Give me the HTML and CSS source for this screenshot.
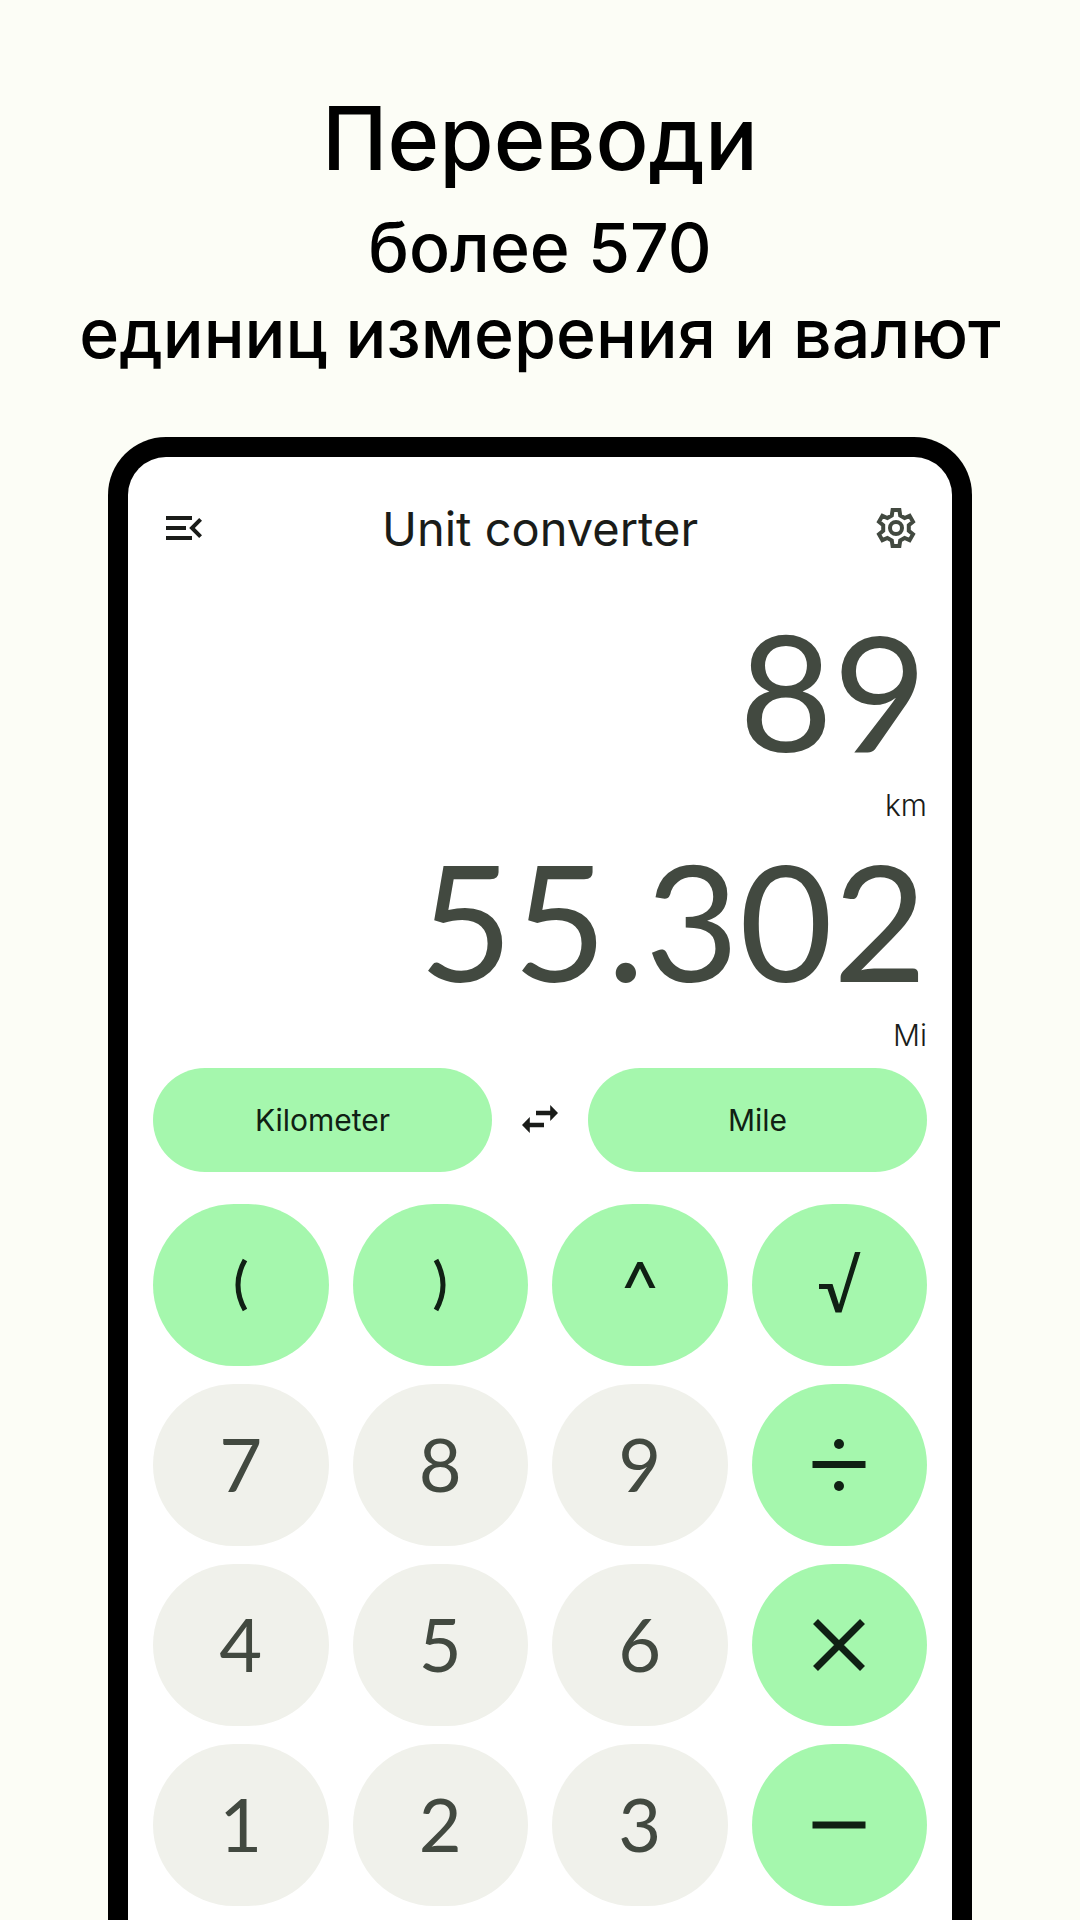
FILE: index.html
```html
<!DOCTYPE html>
<html lang="ru">
<head>
<meta charset="utf-8">
<meta name="viewport" content="width=device-width, initial-scale=1">
<title>Unit converter</title>
<link rel="stylesheet" href="styles.css">
</head>
<body>
<main class="promo">
  <header class="headline">
    <h1 class="headline-title">Переводи</h1>
    <p class="headline-text">более 570<br>единиц измерения и валют</p>
  </header>
  <section class="phone" lang="en">
    <div class="app-bar">
      <button class="icon-button" type="button" aria-label="Menu">
        <svg class="icon" viewBox="0 0 24 24" aria-hidden="true"><path d="M3 18h13v-2H3v2zM3 13h10v-2H3v2zm0-7v2h13V6H3zm18 9.59L17.42 12 21 8.41 19.59 7l-5 5 5 5L21 15.59z"/></svg>
      </button>
      <h2 class="app-title">Unit converter</h2>
      <button class="icon-button icon-button-muted" type="button" aria-label="Settings">
        <svg class="icon" viewBox="0 0 24 24" aria-hidden="true"><g fill="none" stroke="currentColor" stroke-width="2"><path d="M10.300 3h3.400l.4 2.700 2.200 1.300 2.500-1.100 1.700 3-2.100 1.700v2.800l2.100 1.700-1.700 3-2.500-1.100-2.200 1.300-.4 2.700h-3.400l-.4-2.700-2.200-1.300-2.500 1.100-1.700-3 2.100-1.700v-2.800L3.500 8.900l1.700-3L7.700 7l2.200-1.300z"/><circle cx="12" cy="12" r="3"/></g></svg>
      </button>
    </div>
    <div class="display">
      <output class="value">89</output>
      <span class="unit">km</span>
      <output class="value">55.302</output>
      <span class="unit">Mi</span>
    </div>
    <div class="units">
      <button class="unit-button" type="button">Kilometer</button>
      <button class="swap-button" type="button" aria-label="Swap units">
        <svg class="icon" viewBox="0 0 24 24" aria-hidden="true"><path d="M6.900 10.500L3 14.500l3.900 4v-2.900H14v-2.200H6.900zM21 8.500l-3.900-4v2.900H10v2.200h7.100v2.900z"/></svg>
      </button>
      <button class="unit-button" type="button">Mile</button>
    </div>
    <div class="keypad">
      <button class="key key-action" type="button" aria-label="Left parenthesis"><svg class="key-icon" viewBox="0 0 60 60" aria-hidden="true"><path d="M34 5Q20 30 34 55"/></svg></button>
      <button class="key key-action" type="button" aria-label="Right parenthesis"><svg class="key-icon" viewBox="0 0 60 60" aria-hidden="true"><path d="M26 5Q40 30 26 55"/></svg></button>
      <button class="key key-action" type="button" aria-label="Power"><svg class="key-icon" viewBox="0 0 60 60" aria-hidden="true"><path class="solid" d="M14.500 33L27.500 7h5L45.500 33h-6L30 13.500 20.500 33z"/></svg></button>
      <button class="key key-action" type="button" aria-label="Square root"><svg class="key-icon" viewBox="0 0 60 60" aria-hidden="true"><path class="solid" d="M10 29h13.500L30 49.500 46 -3h5.500L32.500 57.500h-6L18.500 34H10z"/></svg></button>
      <button class="key" type="button">7</button>
      <button class="key" type="button">8</button>
      <button class="key" type="button">9</button>
      <button class="key key-action" type="button" aria-label="Divide"><svg class="key-icon" viewBox="0 0 60 60" aria-hidden="true"><path class="bar" d="M3.500 29.500h53"/><circle class="solid" cx="30" cy="9" r="5"/><circle class="solid" cx="30" cy="51" r="5"/></svg></button>
      <button class="key" type="button">4</button>
      <button class="key" type="button">5</button>
      <button class="key" type="button">6</button>
      <button class="key key-action" type="button" aria-label="Multiply"><svg class="key-icon" viewBox="0 0 60 60" aria-hidden="true"><path class="bar" d="M6.500 6.500l47 47M53.500 6.500l-47 47"/></svg></button>
      <button class="key" type="button">1</button>
      <button class="key" type="button">2</button>
      <button class="key" type="button">3</button>
      <button class="key key-action" type="button" aria-label="Subtract"><svg class="key-icon" viewBox="0 0 60 60" aria-hidden="true"><path class="bar" d="M3.500 30h53"/></svg></button>
    </div>
  </section>
</main>
</body>
</html>
```
FILE: styles.css
```css
* {
  box-sizing: border-box;
}

body {
  margin: 0;
  background: #fcfdf6;
  color: #000;
  font-family: Inter, "Noto Sans", sans-serif;
}

button {
  padding: 0;
  border: 0;
  background: none;
  color: inherit;
  font: inherit;
  cursor: pointer;
}

.promo {
  display: flex;
  flex-direction: column;
  align-items: center;
  min-height: 100vh;
}

.headline {
  padding-top: 88px;
  text-align: center;
}

.headline-title {
  margin: 0;
  font-size: 88px;
  font-weight: 500;
  line-height: 100px;
}

.headline-text {
  margin: 16px 0 0;
  font-size: 68px;
  font-weight: 500;
  line-height: 86px;
}

.phone {
  display: flex;
  flex-direction: column;
  flex-grow: 1;
  width: 80%;
  margin-top: 61px;
  padding: 3px 25px 0;
  border: 20px solid #000;
  border-bottom: 0;
  border-radius: 58px 58px 0 0;
  background: #fff;
}

.app-bar {
  display: flex;
  align-items: center;
  justify-content: space-between;
  height: 136px;
  padding: 0 7px;
  color: #1a1c19;
}

.icon-button {
  display: flex;
  width: 48px;
  height: 48px;
}

.icon-button-muted {
  color: #424940;
}

.icon {
  width: 48px;
  height: 48px;
  fill: currentColor;
}

.app-title {
  margin: 0;
  font-size: 47px;
  font-weight: 400;
}

.display {
  display: flex;
  flex-direction: column;
  align-items: flex-end;
  padding-bottom: 12px;
}

.value {
  color: #424940;
  font-family: Lato, sans-serif;
  font-size: 162px;
  font-kerning: none;
  line-height: 188px;
}

.unit {
  color: #1a1c19;
  font-size: 30px;
  font-weight: 300;
  line-height: 42px;
}

.units {
  display: flex;
  align-items: center;
  color: #1a1c19;
}

.unit-button {
  flex: 1;
  height: 104px;
  border-radius: 52px;
  background: #a5f7ad;
  color: #102014;
  font-size: 30px;
  font-weight: 400;
}

.swap-button {
  display: flex;
  justify-content: center;
  width: 96px;
}

.keypad {
  display: grid;
  grid-template-columns: repeat(4, 1fr);
  gap: 18px 24px;
  padding: 32px 0 14px;
}

.key {
  display: flex;
  align-items: center;
  justify-content: center;
  height: 162px;
  padding-bottom: 4px;
  border-radius: 81px;
  background: #f0f1eb;
  color: #424940;
  font-family: Lato, sans-serif;
  font-size: 74px;
}

.key-action {
  padding-bottom: 0;
  background: #a5f7ad;
  color: #102014;
}

.key-icon {
  width: 60px;
  height: 60px;
  overflow: visible;
  fill: none;
  stroke: currentColor;
  stroke-width: 5;
}

.key-icon .bar {
  stroke-width: 7;
}

.key-icon .solid {
  fill: currentColor;
  stroke: none;
}
```
